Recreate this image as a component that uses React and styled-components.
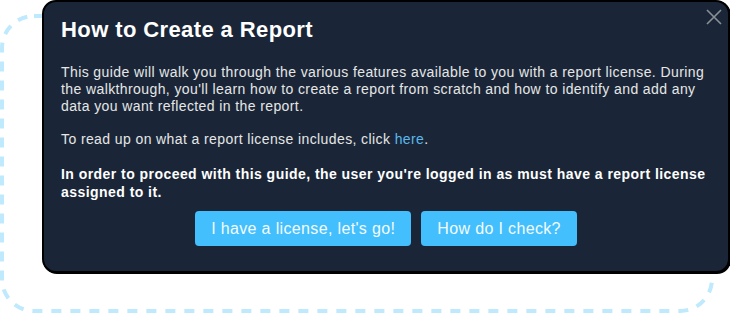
import React from 'react';
import styled, { createGlobalStyle } from 'styled-components';

const GlobalStyle = createGlobalStyle`
  html, body {
    margin: 0;
    padding: 0;
    background: #ffffff;
  }
  body {
    font-family: "Liberation Sans", Arial, sans-serif;
  }
`;

const Stage = styled.div`
  position: relative;
  width: 730px;
  height: 314px;
  overflow: hidden;
`;

// tour spotlight outline drawn behind the guide box
const Highlight = styled.svg`
  position: absolute;
  left: 0;
  top: 0;
  width: 730px;
  height: 314px;
`;

const Dialog = styled.div`
  position: relative;
  margin-left: 42px;
  width: 688px;
  height: 273px;
  box-sizing: border-box;
  background: #1a2638;
  border: 2px solid #000;
  border-radius: 14px;
  box-shadow: 1px 1px 0 #000;
  padding: 15px 17px 0 17px;
  color: #ececec;
  display: flex;
  flex-direction: column;
`;

const CloseButton = styled.button`
  position: absolute;
  top: 5px;
  right: 4px;
  width: 20px;
  height: 20px;
  padding: 0;
  border: none;
  background: none;
  cursor: pointer;
  display: flex;
  align-items: center;
  justify-content: center;
`;

const Title = styled.h2`
  margin: 0 0 21px 0;
  font-size: 22px;
  line-height: 26px;
  font-weight: 700;
  letter-spacing: 0.4px;
  color: #ffffff;
`;

const Paragraph = styled.p`
  margin: 0 0 ${(p) => p.$gap || 15}px 0;
  font-size: 14px;
  line-height: ${(p) => (p.$strong ? 18 : 17)}px;
  letter-spacing: ${(p) => (p.$strong ? '0.45px' : '0.4px')};
  font-weight: ${(p) => (p.$strong ? 700 : 400)};
  color: ${(p) => (p.$strong ? '#ffffff' : '#e6e6e6')};
`;

const Link = styled.a`
  color: #5ab8ea;
  text-decoration: none;
  cursor: pointer;
`;

const Actions = styled.div`
  display: flex;
  justify-content: center;
  gap: 10px;
`;

const ActionButton = styled.button`
  height: 35px;
  padding: 0 16px;
  border: none;
  border-radius: 4px;
  background: #42bffc;
  color: #f4fbff;
  font-family: "Liberation Sans", Arial, sans-serif;
  font-size: 16px;
  letter-spacing: 0.35px;
  cursor: pointer;
`;

const CloseIcon = () => (
  <svg width="16" height="16" viewBox="0 0 16 16">
    <path d="M1 1 L15 15 M15 1 L1 15" stroke="#8a8f96" strokeWidth="1.6" fill="none" />
  </svg>
);

export default function App() {
  return (
    <Stage>
      <GlobalStyle />
      <Highlight viewBox="0 0 730 314">
        <rect
          x="2"
          y="16"
          width="710"
          height="295"
          rx="32"
          fill="none"
          stroke="#bfe9fc"
          strokeWidth="4"
          strokeDasharray="10 9"
        />
      </Highlight>
      <Dialog>
        <CloseButton aria-label="Close">
          <CloseIcon />
        </CloseButton>
        <Title>How to Create a Report</Title>
        <Paragraph $gap={16}>
          This guide will walk you through the various features available to you with a report license. During
          the walkthrough, you'll learn how to create a report from scratch and how to identify and add any data
          you want reflected in the report.
        </Paragraph>
        <Paragraph $gap={17}>
          To read up on what a report license includes, click <Link>here</Link>.
        </Paragraph>
        <Paragraph $strong $gap={10}>
          In order to proceed with this guide, the user you're logged in as must have a report license assigned
          to it.
        </Paragraph>
        <Actions>
          <ActionButton>I have a license, let's go!</ActionButton>
          <ActionButton>How do I check?</ActionButton>
        </Actions>
      </Dialog>
    </Stage>
  );
}
